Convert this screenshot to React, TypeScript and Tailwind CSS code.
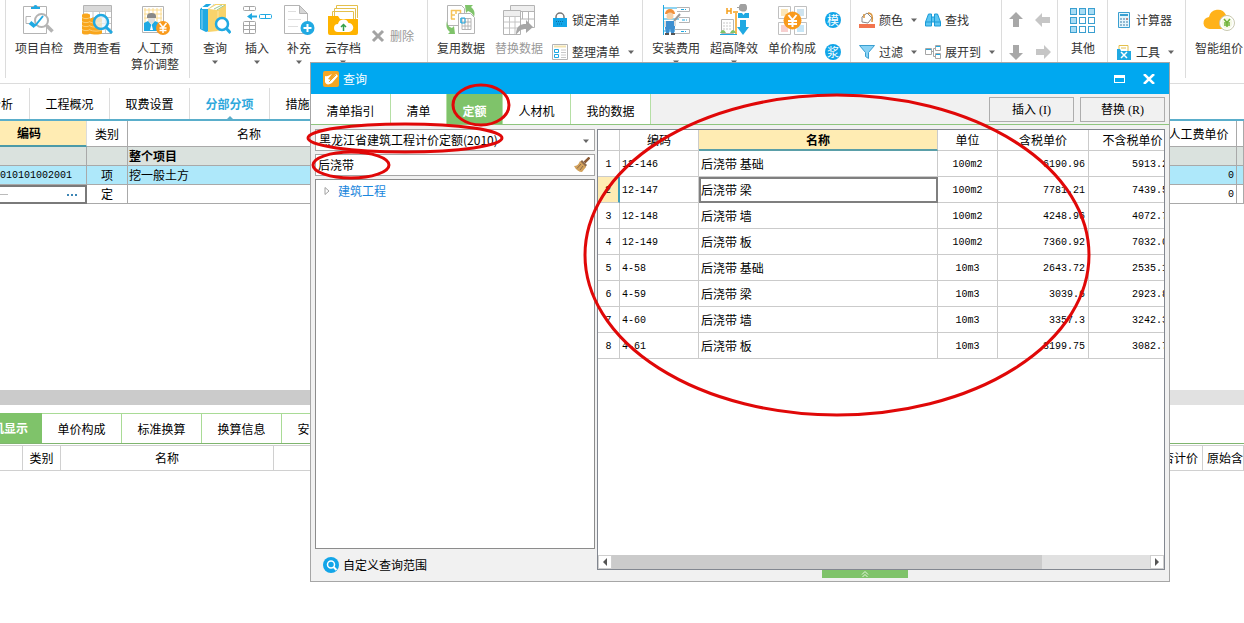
import React from 'react';
import clsx from 'clsx';

interface PriceRow {
  code: string;
  name: string;
  unit: string;
  taxed: string;
  untaxed: string;
}

const ROWS: PriceRow[] = [
  { code: '12-146', name: '后浇带 基础', unit: '100m2', taxed: '6190.96', untaxed: '5913.2' },
  { code: '12-147', name: '后浇带 梁', unit: '100m2', taxed: '7781.21', untaxed: '7439.5' },
  { code: '12-148', name: '后浇带 墙', unit: '100m2', taxed: '4248.96', untaxed: '4072.7' },
  { code: '12-149', name: '后浇带 板', unit: '100m2', taxed: '7360.92', untaxed: '7032.0' },
  { code: '4-58', name: '后浇带 基础', unit: '10m3', taxed: '2643.72', untaxed: '2535.1' },
  { code: '4-59', name: '后浇带 梁', unit: '10m3', taxed: '3039.6', untaxed: '2923.8' },
  { code: '4-60', name: '后浇带 墙', unit: '10m3', taxed: '3357.3', untaxed: '3242.3' },
  { code: '4-61', name: '后浇带 板', unit: '10m3', taxed: '3199.75', untaxed: '3082.7' },
];

/* ---------- icons ---------- */

const Icon32: React.FC<{ children: React.ReactNode }> = ({ children }) => (
  <svg viewBox="0 0 32 32" className="block size-8 shrink-0" fill="none" aria-hidden="true">
    {children}
  </svg>
);

const Icon16: React.FC<{ children: React.ReactNode }> = ({ children }) => (
  <svg viewBox="0 0 16 16" className="block size-4 shrink-0" fill="none" aria-hidden="true">
    {children}
  </svg>
);

const Caret = () => (
  <svg viewBox="0 0 6 4" className="block h-1 w-1.5 shrink-0" aria-hidden="true">
    <path d="M0 .5h6l-3 3.500z" fill="#666" />
  </svg>
);

const CheckIcon = () => (
  <Icon32>
    <path d="M.5 2.500h23v27H.5z" fill="#fff" stroke="#b4b4b4" />
    <path d="M8 5V3h2.500a2 2 0 0 1 4 0H17v2z" fill="#20a9e2" />
    <path d="M8 12.500H3v7h4" stroke="#b4b4b4" />
    <circle cx="18.500" cy="16.500" r="6.500" fill="#fff" stroke="#b4b4b4" strokeWidth="2" />
    <path d="m23.500 21.500 6 6" stroke="#b4b4b4" strokeWidth="3.500" />
    <path d="m7 18.500 5 4" stroke="#20a9e2" strokeWidth="4" />
    <path d="m12 22 8-10" stroke="#20a9e2" strokeWidth="2" />
  </Icon32>
);

const FeeIcon = () => (
  <Icon32>
    <path d="M2.500 1.500h28v28h-28z" fill="#fff" stroke="#b4b4b4" />
    <path d="M3 2h27v5H3z" fill="#d9d9d9" />
    <path d="M3 7.500h27M11 13.500h19M11 19.500h19M11 25h19M12 7v22M18.500 7v22M24.500 7v22" stroke="#c8c8c8" />
    <path d="M1 11c0-2 8-2 8 0v18c0 2-8 2-8 0z" fill="#f9a61d" />
    <path d="M9 15c0-2 12-2 12 0v14c0 2-12 2-12 0z" fill="#f9a61d" />
    <path d="M1 13.500c2 1.500 6 1.500 8 0M1 17.500c2 1.500 6 1.500 8 0M1 21.500c2 1.500 6 1.500 8 0M1 25.500c2 1.500 6 1.500 8 0M9 18c3 1.500 9 1.500 12 0M9 22c3 1.500 9 1.500 12 0M9 26c3 1.500 9 1.500 12 0" stroke="#fbd07a" />
    <circle cx="20" cy="18" r="7" fill="#e8f6fd" fillOpacity=".75" stroke="#20a9e2" strokeWidth="2.500" />
    <path d="m25 23 6 6" stroke="#20a9e2" strokeWidth="3" />
  </Icon32>
);

const LaborIcon = () => (
  <Icon32>
    <path d="M3.500 2.500h21v26h-21z" fill="#fff" stroke="#b4b4b4" />
    <path d="M6 4v22M10 4v22M14 4v22M18 4v22M22 4v22M5 6h18M5 10h18M5 14h18" stroke="#fbdb8e" />
    <path d="M8 12a4.500 3 0 0 1 9 0v2H8z" fill="#888" />
    <path d="M9 14h7v3l-3.500 3L9 17z" fill="#ddd" />
    <path d="M5 27v-8l4-2 3.500 4 3.500-4 4 2v8z" fill="#20a9e2" />
    <path d="m12.500 20 1.500 6h-3z" fill="#fff" />
    <circle cx="24" cy="24" r="7" fill="#f99a1c" />
    <path d="m20.500 19 3.500 4.500 3.500-4.500M24 23.500V29M20.500 24h7M20.500 26.500h7" stroke="#fff" strokeWidth="1.500" />
  </Icon32>
);

const BooksIcon = () => (
  <Icon32>
    <path d="M1 5 7 0h8l-5 5v22l-3 1-6-3z" fill="#20a9e2" />
    <path d="M3 4h6l5-4" stroke="#fff" strokeWidth="2" />
    <path d="M3 6v19" stroke="#8ad3f1" />
    <path d="m9 5 7-5h11v24l-8 3-10 1z" fill="#f8d36b" />
    <path d="m10 5 7-4h9l-7 5z" fill="#fff" />
    <path d="m15 5 8-4M18 6l8-5" stroke="#9cc98f" />
    <path d="M19 7v20" stroke="#fbe5a6" />
    <circle cx="23" cy="20" r="6" fill="#fff" stroke="#20a9e2" strokeWidth="2.500" />
    <path d="m27 24 4.500 5" stroke="#20a9e2" strokeWidth="3" />
  </Icon32>
);

const InsertIcon = () => (
  <Icon32>
    <g stroke="#a6a6a6">
      <rect x="2.500" y="2.500" width="12" height="4" rx="1" />
      <path d="M8.500 2.500v4M2.500 21.500h12M2.500 25.500h12M8.500 17.500v12" />
      <rect x="2.500" y="17.500" width="12" height="12" rx="1" />
    </g>
    <path d="m6 12.500 5-3.500v2.500h5v2h-5V16z" fill="#20a9e2" />
    <rect x="18.500" y="10.500" width="12" height="4" rx="1" stroke="#20a9e2" />
    <path d="M24.500 10.500v4" stroke="#20a9e2" />
  </Icon32>
);

const AddIcon = () => (
  <Icon32>
    <path d="M1.500 1.500h15l8 8v20h-23z" fill="#fff" stroke="#b4b4b4" />
    <path d="M16.500 1.500v8h8z" fill="#d5d5d5" stroke="#b4b4b4" />
    <path d="M5 7.500h8M5 15.500h13M5 22.500h10" stroke="#dedede" />
    <circle cx="24.500" cy="24" r="7" fill="#20a9e2" />
    <path d="M24.500 20v8M20.500 24h8" stroke="#fff" strokeWidth="2" />
  </Icon32>
);

const CloudFolderIcon = () => (
  <Icon32>
    <path d="M9.500 14V1.500h21V14" fill="#fff" stroke="#e4c04c" />
    <path d="M7.500 14V4.500h21V18M5.500 14V7.500h21V18" fill="#fff" stroke="#e4c04c" />
    <path d="M1 12h10l2 3h18v14a2 2 0 0 1-2 2H3a2 2 0 0 1-2-2z" fill="#ffb400" />
    <path d="M11 28a4 4 0 0 1 0-8 5.500 5.500 0 0 1 10.500-1A4.500 4.500 0 0 1 22 28z" fill="#fff" />
    <path d="M16.500 27v-6M14 23l2.500-2.500L19 23" stroke="#35a14a" strokeWidth="1.500" />
  </Icon32>
);

const ReuseIcon = () => (
  <Icon32>
    <path d="M2.500 1.500h14l3 3v17h-17z" fill="#fff" stroke="#b4b4b4" />
    <path d="M6 6.500h10M6 11h4M6 15h4M6.500 6v9M11 6v4M15.500 6v4" stroke="#f6c35a" strokeWidth="1.500" />
    <path d="M13.500 9.500h12l4 4v16h-16z" fill="#fff" stroke="#b4b4b4" />
    <path d="M17 14.500h9v11h-9zM17 18h9M17 22h9M20 14v12M23 14v12" stroke="#b4b4b4" />
    <path d="M16 14v5M20 14h-4v5h4z" stroke="#20a9e2" />
    <path d="M20 1h8l-2 2c4 3 4 7 3 10-1-3-3-5-6-6l-2 2z" fill="#7fc36a" />
    <path d="M2 17c0 4 2 6 5 7l2-2 1 8H3l2-2c-4-3-4-7-3-11z" fill="#7fc36a" />
  </Icon32>
);

const ReplaceIcon = () => (
  <Icon32>
    <path d="M7.500 1.500h24v22h-24z" fill="#fff" stroke="#b4b4b4" />
    <path d="M8 2h23v5H8z" fill="#eee" />
    <path d="M8 7.500h23M14 15h17M19.500 7v8M25.500 7v12" stroke="#b4b4b4" />
    <path d="M.5 6.500h17v24H.5z" fill="#fff" stroke="#b4b4b4" />
    <path d="M1 7h16v5H1z" fill="#eee" />
    <path d="M1 12.500h16M1 18h16M1 24h16M6.500 12v18M12 12v18" stroke="#c4c4c4" />
    <path d="M13 31c0-9 4-11 10-11v-4l7 7-7 6v-4c-5 0-7 2-10 6z" fill="#a6a6a6" />
  </Icon32>
);

const InstallIcon = () => (
  <Icon32>
    <path d="M3.500 1v30M17 4H3M19 15H3M15 27H3" stroke="#20a9e2" />
    <path d="M17 3.500h12.500v4H17M19 13.500h10.500v5H19M15 25.500h14.500v4H15" fill="#fff" stroke="#b4b4b4" />
    <path d="M21 5.500h5M22 16h5M21 27.500h5" stroke="#20a9e2" strokeDasharray="3 1" />
    <path d="M5 10a5 5 0 0 1 10 0z" fill="#f2913b" />
    <circle cx="10" cy="12" r="3.500" fill="#f5d0a7" />
    <path d="m14 17 6-7" stroke="#999" strokeWidth="2" />
    <path d="M5 17h10v7l-1 5h-3l-1-4-1 4H6l-1-5z" fill="#3e8fd0" />
    <path d="M5 17v6M15 17v5" stroke="#ddd" strokeWidth="2" />
    <path d="M5 29h4v2H5zM11 29h4v2h-4z" fill="#555" />
  </Icon32>
);

const HighRiseIcon = () => (
  <Icon32>
    <path d="M9 4v6M13 4v6M9 7h4M15 8h5" stroke="#f5a01d" strokeWidth="1.500" />
    <path d="M18 9v21" stroke="#f5a01d" strokeWidth="1.500" />
    <path d="M3.500 15.500h12v14h-12z" fill="#fff" stroke="#b4b4b4" />
    <path d="M6 18v9M9 18v9M12 18v9" stroke="#c8c8c8" strokeDasharray="2 1" />
    <path d="M2 29c2-4 4-4 6 0zM12 29c2-4 4-4 6 0z" fill="#7fc36a" />
    <path d="M2 30.500h17" stroke="#20a9e2" />
    <path d="M19 3h2a4 3.500 0 0 1 8 0v2a4 3 0 0 1-8-1h-2z" fill="#a0a0a0" />
    <path d="M20 14V9h4l1.500 2L27 9h4v5z" fill="#20a9e2" />
    <path d="M22 16h6v7h3l-6 8-6-8h3z" fill="#20a9e2" />
  </Icon32>
);

const UnitPriceIcon = () => (
  <Icon32>
    <g fill="#fff" stroke="#c0c0c0">
      <path d="M2.500 2.500h12v12h-12zM18.500 2.500h12v12h-12zM2.500 18.500h12v12h-12zM18.500 18.500h12v12h-12z" />
    </g>
    <path d="M5 5h7v7H5z" fill="#fbe6b8" />
    <path d="M21 5h7v7h-7z" fill="#cfe3ee" />
    <path d="M5 21h7v7H5z" fill="#f7cfcf" />
    <path d="M21 21h7v7h-7z" fill="#c6e6f7" />
    <circle cx="16.500" cy="16.500" r="9" fill="#f99a1c" />
    <path d="m12.500 11 4 5 4-5M16.500 16v7M12 17h9M12 20h9" stroke="#fff" strokeWidth="2" />
  </Icon32>
);

const GridIcon = () => (
  <Icon32>
    {[4, 13, 22].map((y) =>
      [4, 13, 22].map((x) => (
        <rect
          key={`${x}-${y}`}
          x={x - 0.5}
          y={y + 0.5}
          width="6"
          height="6"
          fill={y === 4 || x === 4 ? '#a8dcf4' : '#fff'}
          stroke="#3a9fd0"
        />
      )),
    )}
  </Icon32>
);

const CloudPriceIcon = () => (
  <Icon32>
    <path d="M7 25a6 6 0 0 1-1-12 9 9 0 0 1 17-2 7 7 0 0 1 0 14z" fill="#ffb21a" />
    <circle cx="24" cy="19" r="7.500" fill="#fff" stroke="#c9c9b0" />
    <circle cx="24" cy="19" r="5.500" fill="#f4f8e4" />
    <path d="m21 15 3 3.500 3-3.500M24 18.500V23M21 19h6M21 21h6" stroke="#6fb23a" strokeWidth="1.500" />
  </Icon32>
);

const DeleteIcon = () => (
  <Icon16>
    <path d="m3 3 10 10M13 3 3 13" stroke="#a3a3a3" strokeWidth="3" />
  </Icon16>
);

const LockIcon = () => (
  <Icon16>
    <path d="M4 7V5a4 4 0 0 1 8 0v2" stroke="#777" strokeWidth="1.500" />
    <path d="M1 6h14v9H1z" fill="#12a5e8" />
    <path d="M4 9.500h8M5 12h6" stroke="#0b6fa3" strokeDasharray="1 1" />
  </Icon16>
);

const ListIcon = () => (
  <Icon16>
    <path d="M.5.5h15v15H.5z" fill="#fff" stroke="#b4b4b4" />
    <path d="M2 2.500h12" stroke="#f3e2ae" strokeWidth="2" />
    <path d="M2.500 5.500h4v3h-4zM2.500 10.500h4v3h-4z" stroke="#20a9e2" />
    <path d="M9 6h5M9 8.500h5M9 11h5M9 13.500h5" stroke="#c8c8c8" />
  </Icon16>
);

const PaintIcon = () => (
  <Icon16>
    <path d="m3 5 5-4 5 5-4 5-6-1z" fill="#fff" stroke="#888" />
    <path d="M5 2v4M9 1c4 0 5 3 4 9" stroke="#d9953f" strokeWidth="1.500" />
    <path d="M0 12h16v4H0z" fill="#f2744e" />
  </Icon16>
);

const FindIcon = () => (
  <Icon16>
    <path d="M3.500 2h3v3h3V2h3l3 8v4h-6v-4h-3v4H.5v-4z" fill="#5cc6f2" stroke="#1b9bd7" />
    <path d="M6.500 5v5M9.500 5v5M1 10h5M10 10h5" stroke="#1b9bd7" />
  </Icon16>
);

const FilterIcon = () => (
  <Icon16>
    <path d="M.5 1.500h15l-6 7v6l-3-2v-4z" fill="#8ad3f5" stroke="#3a9fd0" />
  </Icon16>
);

const ExpandIcon = () => (
  <Icon16>
    <path d="M.5 4.500h6v6h-6zM10.500 1.500h5v5h-5zM10.500 9.500h5v5h-5z" fill="#fff" stroke="#a6a6a6" />
    <path d="M1 5.500h5M11 2.500h4M11 10.500h4" stroke="#20a9e2" />
    <path d="M7 7.500h2M8.500 12.500V4.500h2M8.500 12.500h2" stroke="#a6a6a6" />
  </Icon16>
);

const ArrowIcon: React.FC<{ className?: string; color: string }> = ({ className, color }) => (
  <svg viewBox="0 0 16 16" className={clsx('block size-4', className)} aria-hidden="true">
    <path d="M8 0 15 7h-4v8H5V7H1z" fill={color} />
  </svg>
);

const CalcIcon = () => (
  <Icon16>
    <path d="M2.500.5h11v15h-11z" fill="#e6f5fc" stroke="#3a9fd0" />
    <path d="M4 3h8" stroke="#3a9fd0" strokeWidth="2" />
    <path d="M4 7h8M4 10h8M4 13h8" stroke="#3a7fa8" strokeDasharray="2 1" />
    <path d="M10 7h2" stroke="#e05a3a" />
  </Icon16>
);

const ToolsIcon = () => (
  <Icon16>
    <path d="M3 8V1.500h9V8" fill="#fff" stroke="#e4c04c" />
    <path d="M5 4h5" stroke="#e4c04c" />
    <path d="M1 5h3l1 2h10v9H1z" fill="#20a9e2" />
    <path d="m5 8 6 6M11 8l-6 6" stroke="#fff" strokeWidth="1.500" />
  </Icon16>
);

const BroomIcon = () => (
  <Icon16>
    <path d="m15.500.5-5 5" stroke="#8a5a35" strokeWidth="2.500" />
    <path d="m8 3 5 5-2 2.500-5.500-5z" fill="#8d6a4b" />
    <path d="m6 4 6 6-4 5c-3 0-6-2-8-6 3 0 5-2 6-5z" fill="#d3a25c" />
    <path d="m7 7-4 4.500M9 9l-3 4" stroke="#8d6a4b" />
  </Icon16>
);

/* ---------- toolbar ---------- */

const Group: React.FC<{ className: string; children?: React.ReactNode }> = ({ className, children }) => (
  <div className={clsx('flex h-[78px] shrink-0 border-r border-[#dcdcdc]', className)}>{children}</div>
);

interface BigToolProps {
  icon: React.ReactNode;
  label: React.ReactNode;
  width?: string;
  caret?: boolean;
  muted?: boolean;
}

const BigTool: React.FC<BigToolProps> = ({ icon, label, width = 'w-[58px]', caret, muted }) => (
  <button
    type="button"
    className={clsx(
      'flex shrink-0 flex-col items-center pt-1 leading-4 whitespace-nowrap',
      width,
      muted ? 'text-[#999]' : 'text-[#333]',
    )}
  >
    {icon}
    <span className="mt-1 mb-1">{label}</span>
    {caret && <Caret />}
  </button>
);

const SmallTool: React.FC<{ icon: React.ReactNode; label: string; caret?: boolean }> = ({ icon, label, caret }) => (
  <button type="button" className="flex h-8 items-center gap-1 whitespace-nowrap text-[#333]">
    {icon}
    <span>{label}</span>
    {caret && (
      <span className="ml-1">
        <Caret />
      </span>
    )}
  </button>
);

const Toolbar = () => (
  <header className="flex h-[84px] overflow-hidden border-b border-[#dcdcdc]">
    <Group className="w-1.5" />
    <Group className="w-[184px] pl-1">
      <BigTool icon={<CheckIcon />} label="项目自检" />
      <BigTool icon={<FeeIcon />} label="费用查看" />
      <BigTool
        icon={<LaborIcon />}
        label={
          <>
            人工预
            <br />
            算价调整
          </>
        }
      />
    </Group>
    <Group className="w-[238px] pl-1">
      <BigTool icon={<BooksIcon />} label="查询" width="w-[42px]" caret />
      <BigTool icon={<InsertIcon />} label="插入" width="w-[42px]" caret />
      <BigTool icon={<AddIcon />} label="补充" width="w-[42px]" caret />
      <BigTool icon={<CloudFolderIcon />} label="云存档" width="w-[46px]" caret />
      <button type="button" className="ml-1 flex h-[72px] items-center gap-1 text-[#999]">
        <DeleteIcon />
        删除
      </button>
    </Group>
    <Group className="w-[215px] pl-1">
      <BigTool icon={<ReuseIcon />} label="复用数据" />
      <BigTool icon={<ReplaceIcon />} label="替换数据" muted />
      <div className="ml-1 flex flex-col pt-1">
        <SmallTool icon={<LockIcon />} label="锁定清单" />
        <SmallTool icon={<ListIcon />} label="整理清单" caret />
      </div>
    </Group>
    <Group className="w-[208px] pl-1">
      <BigTool icon={<InstallIcon />} label="安装费用" caret />
      <BigTool icon={<HighRiseIcon />} label="超高降效" caret />
      <BigTool icon={<UnitPriceIcon />} label="单价构成" />
      <div className="ml-1 flex flex-col gap-4 pt-3">
        {['模', '浆'].map((label) => (
          <button key={label} type="button" className="size-4 rounded-full bg-[#12a5e8] text-center text-white">
            <span className="block leading-4">{label}</span>
          </button>
        ))}
      </div>
    </Group>
    <Group className="w-[151px] gap-2 pl-2">
      <div className="flex flex-col pt-1">
        <SmallTool icon={<PaintIcon />} label="颜色" caret />
        <SmallTool icon={<FilterIcon />} label="过滤" caret />
      </div>
      <div className="flex flex-col pt-1">
        <SmallTool icon={<FindIcon />} label="查找" />
        <SmallTool icon={<ExpandIcon />} label="展开到" caret />
      </div>
    </Group>
    <Group className="w-14">
      <div className="grid w-full grid-cols-2 content-start gap-y-4 px-1.5 pt-3">
        <button type="button" aria-label="上移">
          <ArrowIcon color="#a8a8a8" />
        </button>
        <button type="button" aria-label="升级" className="justify-self-end">
          <ArrowIcon color="#c6c6c6" className="-rotate-90" />
        </button>
        <button type="button" aria-label="下移">
          <ArrowIcon color="#a8a8a8" className="rotate-180" />
        </button>
        <button type="button" aria-label="降级" className="justify-self-end">
          <ArrowIcon color="#c6c6c6" className="rotate-90" />
        </button>
      </div>
    </Group>
    <Group className="w-[50px]">
      <BigTool icon={<GridIcon />} label="其他" width="w-[50px]" />
    </Group>
    <Group className="w-[78px] pl-2">
      <div className="flex flex-col pt-1">
        <SmallTool icon={<CalcIcon />} label="计算器" />
        <SmallTool icon={<ToolsIcon />} label="工具" caret />
      </div>
    </Group>
    <div className="pl-1">
      <BigTool icon={<CloudPriceIcon />} label="智能组价" />
    </div>
  </header>
);

/* ---------- main page ---------- */

const PageTabs = () => (
  <nav className="flex h-[37px] overflow-hidden border-b-2 border-[#5aaecb] pt-1">
    {['分析', '工程概况', '取费设置', '分部分项', '措施项目'].map((label, i) => (
      <button
        key={label}
        type="button"
        className={clsx(
          'relative h-8 shrink-0 border-r border-[#dcdcdc]',
          i === 0 ? 'flex w-[30px] items-center justify-end pr-4 whitespace-nowrap' : 'w-20',
          i === 3 && 'font-bold text-[#2fa8dc]',
        )}
      >
        {label}
        {i === 3 && (
          <svg viewBox="0 0 8 4" className="absolute bottom-0 left-9 h-1 w-2" aria-hidden="true">
            <path d="M0 4 4 0l4 4z" fill="#5aaecb" />
          </svg>
        )}
      </button>
    ))}
  </nav>
);

const mono = "pt-0.5 font-['Liberation_Mono',monospace] text-[10px]";
const cell = 'overflow-hidden border-r border-b border-[#a9a9a9] p-0 whitespace-nowrap';

const BillTable = () => (
  <table className="w-full table-fixed border-separate border-spacing-0 leading-4">
    <colgroup>
      <col className="w-[87px]" />
      <col className="w-[41px]" />
      <col className="w-[243px]" />
      <col />
      <col className="w-[76px]" />
      <col className="w-[7px]" />
    </colgroup>
    <thead>
      <tr className="h-[26px]">
        <th className="border-r border-b-2 border-r-[#dcdcdc] border-b-[#4b9aa8] bg-[#ffecb3] p-0 pr-7 font-bold">
          编码
        </th>
        <th className={cell + ' font-normal'}>类别</th>
        <th className={cell + ' font-normal'}>名称</th>
        <th className={cell} />
        <th className={cell + ' font-normal'}>人工费单价</th>
        <th className={cell} />
      </tr>
    </thead>
    <tbody>
      <tr className="h-[19px] bg-[#dae2de]">
        <td className={cell} />
        <td className={cell} />
        <td className={cell + ' pl-px font-bold'}>整个项目</td>
        <td className={cell} />
        <td className={cell} />
        <td className={cell} />
      </tr>
      <tr className="h-[19px] bg-[#aee8fa]">
        <td className={clsx(cell, mono)}>010101002001</td>
        <td className={cell + ' text-center'}>项</td>
        <td className={cell + ' pl-px'}>挖一般土方</td>
        <td className={cell} />
        <td className={clsx(cell, mono, 'pr-0.5 text-right')}>0</td>
        <td className={cell} />
      </tr>
      <tr className="h-[19px]">
        <td className="border-y-2 border-r-2 border-[#7a7a7a] p-0">
          <div className="flex h-[15px] items-center justify-between pr-2">
            <span className="h-px w-2 bg-[#bbb]" />
            <button type="button" aria-label="更多" className="flex gap-0.5">
              <span className="size-0.5 bg-[#3d86b5]" />
              <span className="size-0.5 bg-[#3d86b5]" />
              <span className="size-0.5 bg-[#3d86b5]" />
            </button>
          </div>
        </td>
        <td className={cell + ' text-center'}>定</td>
        <td className={cell} />
        <td className={cell} />
        <td className={clsx(cell, mono, 'pr-0.5 text-right')}>0</td>
        <td className={cell} />
      </tr>
    </tbody>
  </table>
);

const head = 'overflow-hidden border-y border-r border-[#d0d0d0] p-0 font-normal whitespace-nowrap';

const DetailPane = () => (
  <section>
    <nav className="flex h-[31px] overflow-hidden border-b border-[#7fb56e]">
      <button
        type="button"
        className="flex w-[42px] shrink-0 items-center justify-end bg-[#7fc36a] pr-3.5 font-bold whitespace-nowrap text-white"
      >
        工料机显示
      </button>
      {['单价构成', '标准换算', '换算信息', '安装费用'].map((label) => (
        <button key={label} type="button" className="w-20 shrink-0 border-t border-r border-[#a9db96]">
          {label}
        </button>
      ))}
    </nav>
    <table className="mt-px w-full table-fixed border-separate border-spacing-0">
      <colgroup>
        <col className="w-[23px]" />
        <col className="w-[38px]" />
        <col className="w-[213px]" />
        <col />
        <col className="w-[70px]" />
        <col className="w-[41px]" />
      </colgroup>
      <thead>
        <tr className="h-[26px]">
          <th className={head} />
          <th className={head}>类别</th>
          <th className={head + ' '}>名称</th>
          <th className={head} />
          <th className={head + ' pr-1 text-right'}>是否计价</th>
          <th className={head + ' pl-1 text-left'}>原始含量</th>
        </tr>
      </thead>
    </table>
  </section>
);

/* ---------- query dialog ---------- */

const gridCell = 'border-r border-b border-[#cbcbcb] p-0 whitespace-nowrap';
const gridHead = gridCell + ' font-normal';

const ResultGrid = () => (
  <table className="w-[579px] table-fixed border-separate border-spacing-0">
    <colgroup>
      <col className="w-[22px]" />
      <col className="w-[79px]" />
      <col className="w-[239px]" />
      <col className="w-[60px]" />
      <col className="w-[91px]" />
      <col className="w-[88px]" />
    </colgroup>
    <thead>
      <tr className="h-[21px]">
        <th className={gridHead} />
        <th className={gridHead}>编码</th>
        <th className="border-r border-b-2 border-r-[#cbcbcb] border-b-[#5a9fa8] bg-[#ffecb3] p-0 font-bold">名称</th>
        <th className={gridHead}>单位</th>
        <th className={gridHead}>含税单价</th>
        <th className={gridHead}>不含税单价</th>
      </tr>
    </thead>
    <tbody>
      {ROWS.map((row, i) => {
        const selected = i === 1;
        return (
          <tr key={row.code} className="h-[26px]">
            <td
              className={clsx(
                'border-b border-b-[#cbcbcb] p-0 text-center',
                mono,
                selected ? 'border-r-2 border-r-[#3f9fb8] bg-[#ffecb3]' : 'border-r border-r-[#cbcbcb]',
              )}
            >
              {i + 1}
            </td>
            <td className={clsx(gridCell, mono, 'pl-0.5')}>{row.code}</td>
            <td className={clsx('p-0', selected ? 'border-2 border-[#7f7f7f]' : gridCell + ' pl-0.5')}>{row.name}</td>
            <td className={clsx(gridCell, mono, 'text-center')}>{row.unit}</td>
            <td className={clsx(gridCell, mono, 'pr-[3px] text-right')}>{row.taxed}</td>
            <td className={clsx(gridCell, mono, 'pr-2 text-right')}>{row.untaxed}</td>
          </tr>
        );
      })}
    </tbody>
  </table>
);

const Scrollbar = () => (
  <div className="flex h-3.5 bg-[#e1e1e1]">
    <button type="button" aria-label="向左" className="grid w-3.5 place-items-center border border-[#cfcfcf] bg-white">
      <svg viewBox="0 0 4 8" className="h-2 w-1" aria-hidden="true">
        <path d="M4 0v8L0 4z" fill="#555" />
      </svg>
    </button>
    <div className="flex-1">
      <div className="h-full w-4/5 bg-[#cbcbcb]" />
    </div>
    <button type="button" aria-label="向右" className="grid w-3.5 place-items-center border border-[#cfcfcf] bg-white">
      <svg viewBox="0 0 4 8" className="h-2 w-1" aria-hidden="true">
        <path d="M0 0v8l4-4z" fill="#555" />
      </svg>
    </button>
  </div>
);

const DIALOG_TABS = [
  { label: '清单指引', width: 'w-20' },
  { label: '清单', width: 'w-14' },
  { label: '定额', width: 'w-14' },
  { label: '人材机', width: 'w-[68px]' },
  { label: '我的数据', width: 'w-20' },
];

const QueryDialog = () => (
  <div
    role="dialog"
    aria-labelledby="query-title"
    className="absolute top-[62px] left-[310px] flex h-[520px] w-[860px] flex-col border border-[#a6a6a6] bg-[#f1f1f1]"
  >
    <div className="flex h-[31px] shrink-0 items-center bg-[#00a8f0] pr-3.5 pl-3 text-white">
      <Icon16>
        <rect width="16" height="16" rx="2" fill="#f5a623" />
        <path d="M2 5c3 1 4-1 7-2l-4 5 3 1 5-6 2 2-6 7c-3 2-6 2-7-1z" fill="#fff" />
        <path d="m6 11 7-7" stroke="#f5a623" />
      </Icon16>
      <h2 id="query-title" className="ml-1 flex-1">
        查询
      </h2>
      <button type="button" aria-label="最大化" className="mr-[18px] h-2 w-[11px] border border-t-[3px] border-white" />
      <button type="button" aria-label="关闭">
        <svg viewBox="0 0 12 10" className="h-2.5 w-3" aria-hidden="true">
          <path d="m1 0 10 10M11 0 1 10" stroke="#fff" strokeWidth="2.500" />
        </svg>
      </button>
    </div>

    <div className="flex h-[31px] shrink-0 border-b border-[#8fc57e]">
      {DIALOG_TABS.map((tab, i) => (
        <button
          key={tab.label}
          type="button"
          className={clsx(
            'border-r border-[#b5dfa5] pt-1',
            tab.width,
            i === 2 ? 'bg-[#7fc36a] font-bold text-white' : 'bg-white',
          )}
        >
          {tab.label}
        </button>
      ))}
      <div className="ml-auto flex gap-1.5 pt-[3px] pr-1">
        <button type="button" className="h-[25px] w-[85px] border border-[#adadad]">
          插入<span className="font-['Liberation_Serif',serif]"> (I)</span>
        </button>
        <button type="button" className="h-[25px] w-[85px] border border-[#adadad]">
          替换<span className="font-['Liberation_Serif',serif]"> (R)</span>
        </button>
      </div>
    </div>

    <div className="flex min-h-0 flex-1 gap-0.5 pt-1 pr-1 pl-1">
      <div className="flex w-[280px] flex-col">
        <div className="relative h-[22px] shrink-0">
          <select
            aria-label="定额库"
            className="block h-full w-full appearance-none border border-[#a6a6a6] bg-white pl-[3px]"
          >
            <option>黑龙江省建筑工程计价定额(2010)</option>
          </select>
          <span className="pointer-events-none absolute top-2.5 right-1.5">
            <Caret />
          </span>
        </div>
        <div className="mt-[3px] flex h-[22px] shrink-0 items-center border border-[#a6a6a6] bg-white pr-1">
          <input
            type="text"
            aria-label="查询条件"
            defaultValue="后浇带"
            className="min-w-0 flex-1 bg-transparent pl-0.5 outline-none"
          />
          <button type="button" aria-label="清除">
            <BroomIcon />
          </button>
        </div>
        <div className="mt-[3px] h-[370px] border border-[#8c8c8c] bg-white">
          <button type="button" className="flex h-[22px] items-center gap-2 pl-2 text-[#1a86dc]">
            <svg viewBox="0 0 6 8" className="h-2 w-1.5" fill="none" aria-hidden="true">
              <path d="M1 .5v7L5 4z" stroke="#a0a0a0" />
            </svg>
            建筑工程
          </button>
        </div>
        <button type="button" className="flex flex-1 items-center gap-1 pl-2">
          <svg viewBox="0 0 16 16" className="size-4" fill="none" aria-hidden="true">
            <circle cx="8" cy="8" r="8" fill="#12a5e8" />
            <circle cx="8" cy="7.500" r="3.500" stroke="#fff" strokeWidth="1.500" />
            <path d="m10.500 10 3 3" stroke="#fff" strokeWidth="2" />
          </svg>
          自定义查询范围
        </button>
      </div>

      <div className="flex min-w-0 flex-1 flex-col">
        <div className="flex h-[441px] flex-col border border-[#828790] bg-white">
          <div className="flex-1 overflow-hidden">
            <ResultGrid />
          </div>
          <Scrollbar />
        </div>
        <button
          type="button"
          aria-label="展开"
          className="mr-8 grid h-2 w-[86px] place-items-center self-center bg-[#7fc36a]"
        >
          <svg viewBox="0 0 8 6" className="h-1.5 w-2" fill="none" aria-hidden="true">
            <path d="m1 3.500 3-3 3 3M1.500 6 4 3.500 6.500 6" stroke="#e6f5df" />
          </svg>
        </button>
      </div>
    </div>
  </div>
);

// hand-drawn red marks laid over the whole screen
const Marks = () => (
  <svg
    viewBox="0 0 1244 623"
    className="pointer-events-none absolute top-0 left-0 h-[623px] w-[1244px]"
    fill="none"
    stroke="#e00808"
    strokeWidth="3"
    aria-hidden="true"
  >
    <ellipse cx="837" cy="255" rx="252" ry="160" />
    <ellipse cx="481" cy="105" rx="28" ry="20" />
    <ellipse cx="405" cy="138" rx="97" ry="14" />
    <ellipse cx="351" cy="165" rx="38" ry="13" />
  </svg>
);

export default function App() {
  return (
    <div className="relative min-h-screen overflow-hidden bg-white font-['Noto_Sans_CJK_SC',sans-serif] text-xs text-black">
      <Toolbar />
      <PageTabs />
      <main>
        <div className="h-[269px]">
          <BillTable />
        </div>
        <div className="mb-2 h-[15px] bg-[#e1e1e1]">
          <div className="h-full w-1/2 bg-[#cbcbcb]" />
        </div>
        <DetailPane />
      </main>
      <QueryDialog />
      <Marks />
    </div>
  );
}
